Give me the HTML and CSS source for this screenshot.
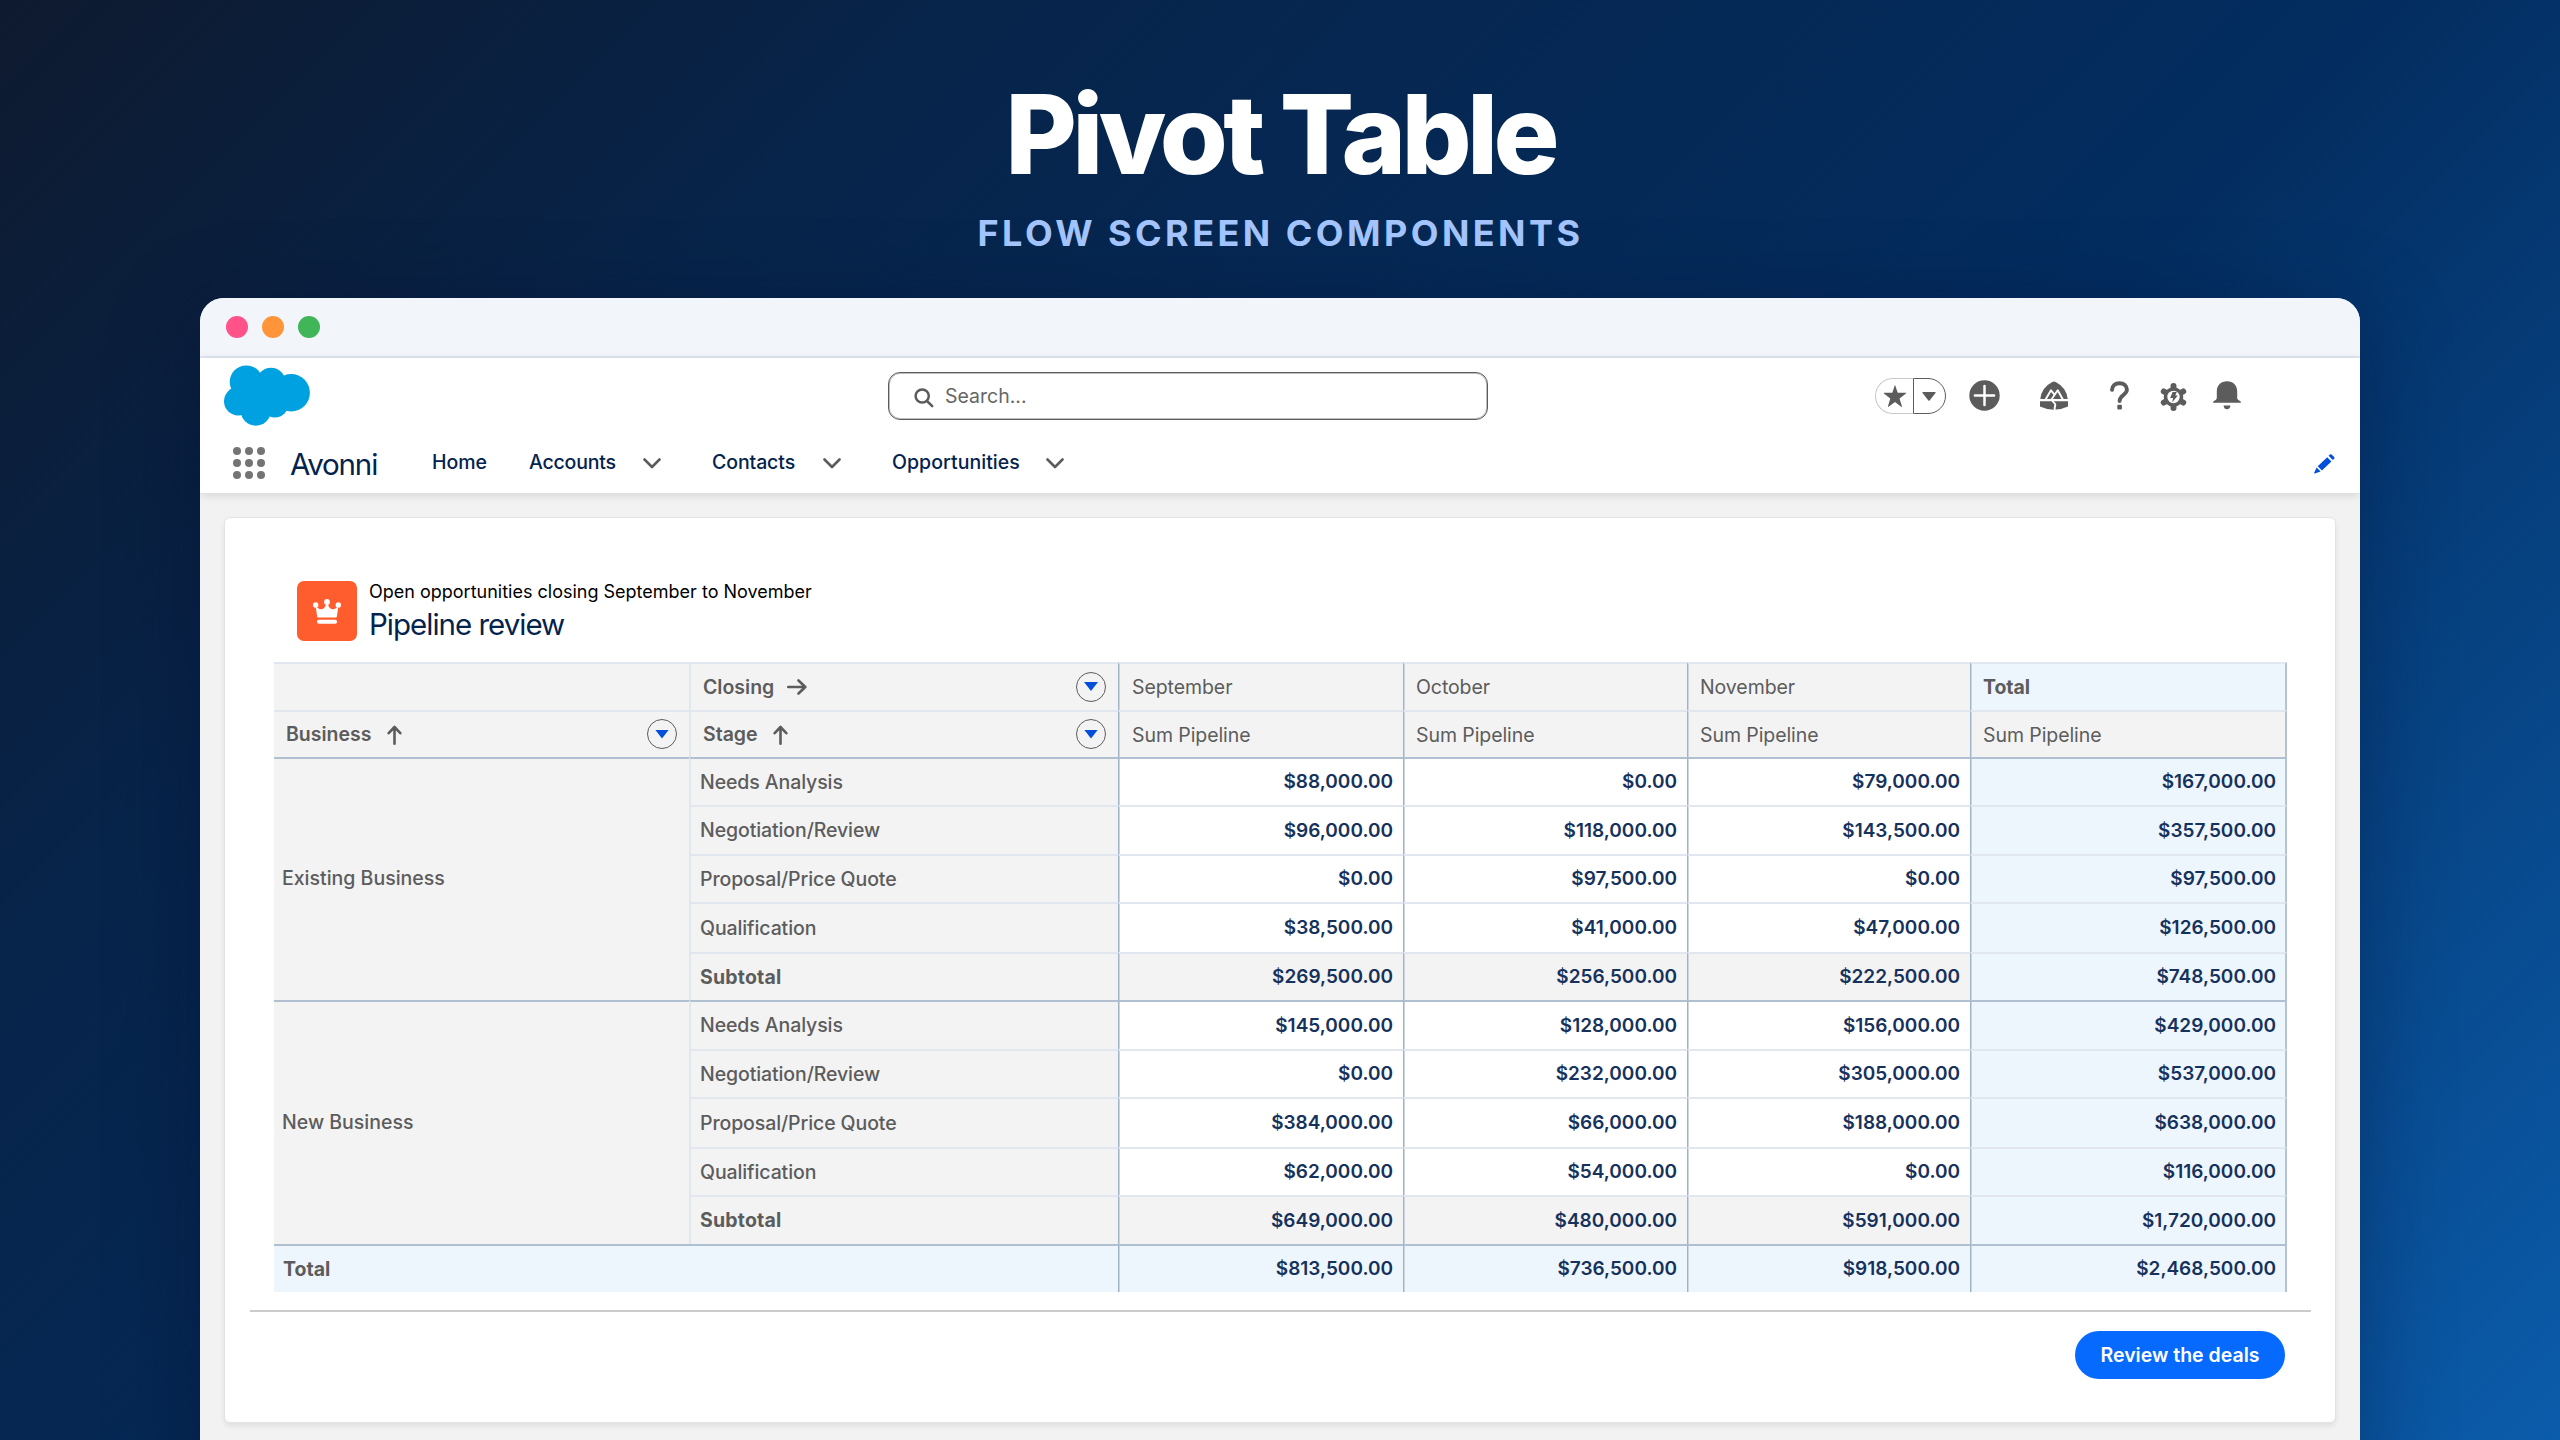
FILE: index.html
```html
<!DOCTYPE html>
<html lang="en">
<head>
<meta charset="utf-8">
<title>Pivot Table</title>
<link rel="stylesheet" href="styles.css">
</head>
<body>
<header class="hero">
  <h1 class="hero-title">Pivot Table</h1>
  <p class="hero-sub">FLOW SCREEN COMPONENTS</p>
</header>

<main class="window">
  <div class="titlebar">
    <span class="dot dot-pink"></span><span class="dot dot-orange"></span><span class="dot dot-green"></span>
  </div>

  <div class="appbar">
    <div class="global">
      <svg class="cloud" viewBox="0 0 86 61" fill="#00a1e0">
        <circle cx="22.3" cy="17" r="16.6"/><circle cx="47" cy="17.3" r="14.5"/><circle cx="67.2" cy="27.8" r="18.7"/>
        <circle cx="14.2" cy="36.3" r="14.2"/><circle cx="31.8" cy="45.7" r="15"/><circle cx="51" cy="39" r="13.4"/>
        <rect x="18" y="17" width="42" height="28"/>
      </svg>
      <div class="search">
        <svg width="20" height="20" viewBox="0 0 20 20" fill="none" stroke="#5c5c5c" stroke-width="2.5" stroke-linecap="round"><circle cx="8.2" cy="8" r="6.6"/><path d="M13 13l5.2 5.2"/></svg>
        <span>Search...</span>
      </div>
      <div class="fav">
        <span class="fav-star"><svg width="24" height="24" viewBox="0 0 24 24" fill="#5c5c5c"><path d="M12 .8l2.700 8h8.200q.6.3.1.8l-6.500 4.800 2.500 8.100q-.1.7-.8.3L12 18l-6.400 4.800q-.6.2-.7-.4l2.400-8L.9 9.600q-.4-.6.2-.8h8.200z"/></svg></span>
        <span class="fav-more"><svg width="14" height="9" viewBox="0 0 14 9" fill="#5c5c5c"><path d="M.8 0h12.400q.8.3.3 1L7.600 8.400q-.6.5-1.200 0L.5 1Q0 .3.800 0z"/></svg></span>
      </div>
      <svg class="i-plus" width="31" height="31" viewBox="0 0 31 31"><circle cx="15.500" cy="15.500" r="15.200" fill="#5c5c5c"/><path d="M15.500 5.900v19.200M5.900 15.500h19.200" stroke="#fff" stroke-width="2.500" stroke-linecap="round"/></svg>
      <svg class="i-trail" width="28" height="29" viewBox="0 0 28 29" fill="#5c5c5c">
        <path d="M.3 18Q1.500 6.500 12.300 1q1.700-.8 3.400 0Q26.500 6.500 27.700 18z"/>
        <path d="M0 20.300h28v5.200Q21.500 28.700 14 28.700T0 25.500z"/>
        <path d="M5.400 18.800L11 9.300l3.500 4.300M11.300 18.800l6.400-9.500 5.300 9.500" fill="none" stroke="#fff" stroke-width="1.900" stroke-linejoin="round"/>
        <path d="M12.600 19.500c.2 2.500 3.500 2.600 2.600 5-.4 1.300-.8 2.500-.4 4.500" fill="none" stroke="#fff" stroke-width="1.900"/>
      </svg>
      <svg class="i-help" width="19" height="29" viewBox="0 0 19 29"><path d="M2 8.800C2.200 4.500 5.200 2.200 9.500 2.200s7.400 2.600 7.400 6.600c0 5-7.300 5.600-7.300 11.200" fill="none" stroke="#5c5c5c" stroke-width="3.900" stroke-linecap="round"/><rect x="7.300" y="23.800" width="4.600" height="4.800" rx="1" fill="#5c5c5c"/></svg>
      <svg class="i-gear" width="27" height="30" viewBox="0 0 27 30">
        <g stroke="#5c5c5c" stroke-width="6" stroke-linecap="round"><path d="M13.500 4v22M3.800 9.500l19.400 11M3.800 20.500l19.400-11"/></g>
        <circle cx="13.500" cy="15" r="9.800" fill="#5c5c5c"/><circle cx="13.500" cy="15" r="6.200" fill="#fff"/>
        <path d="M12.600 10h4.200l-1.500 3.500h2.500l-5.700 7 1-4.600H10.200z" fill="#5c5c5c"/>
      </svg>
      <svg class="i-bell" width="28" height="29" viewBox="0 0 28 29" fill="#5c5c5c"><path d="M14 .3c6 0 10.200 4 10.200 10.200v6.300c0 1.400.7 2 2 2.600 1.200.5 1.800 1.300 1.800 2.300H0c0-1 .6-1.800 1.800-2.300 1.300-.6 2-1.200 2-2.600v-6.300C3.800 4.300 8 .3 14 .3zM10.600 24.600h6.800c0 2.400-1.500 3.700-3.400 3.700s-3.400-1.300-3.400-3.700z"/></svg>
    </div>
    <nav class="nav">
      <svg class="waffle" width="32" height="32" viewBox="0 0 32 32" fill="#747474"><circle cx="4" cy="4" r="4"/><circle cx="16" cy="4" r="4"/><circle cx="28" cy="4" r="4"/><circle cx="4" cy="16" r="4"/><circle cx="16" cy="16" r="4"/><circle cx="28" cy="16" r="4"/><circle cx="4" cy="28" r="4"/><circle cx="16" cy="28" r="4"/><circle cx="28" cy="28" r="4"/></svg>
      <span class="app-name">Avonni</span>
      <span class="tab tab-home">Home</span>
      <span class="tab tab-accounts">Accounts</span>
      <svg class="chev" width="18" height="11" viewBox="0 0 18 11"><path d="M1.500 1.500L9 9l7.500-7.500"/></svg>
      <span class="tab tab-contacts">Contacts</span>
      <svg class="chev" width="18" height="11" viewBox="0 0 18 11"><path d="M1.500 1.500L9 9l7.500-7.500"/></svg>
      <span class="tab tab-opps">Opportunities</span>
      <svg class="chev" width="18" height="11" viewBox="0 0 18 11"><path d="M1.500 1.500L9 9l7.500-7.500"/></svg>
      <svg class="pencil" width="21" height="20" viewBox="0 0 21 20" fill="#0250d9"><path d="M13.200 3.200l4.200 4.200L7.900 16.500 3.700 12.300zM14.600 1.800l1.300-1.300q.8-.7 1.700 0l2.500 2.500q.7.800 0 1.700l-1.300 1.400zM2.600 13.600l4 4-5.800 1.900q-.8.1-.6-.7z"/></svg>
    </nav>
  </div>

  <section class="card">
    <div class="heading">
      <span class="tile"><svg width="28" height="25" viewBox="0 0 28 25" fill="#fff"><circle cx="2.700" cy="6" r="2.700"/><circle cx="14" cy="3" r="2.900"/><circle cx="25.300" cy="6" r="2.700"/><path d="M2.500 6.500q3.500 4.800 7 3.500 3-1.300 3.600-5.500h1.800q.6 4.200 3.600 5.500 3.500 1.300 7-3.500L23.800 17.800q-.2.700-1 .7H5.200q-.8 0-1-.7z"/><rect x="4" y="20.700" width="20" height="4" rx="1.800"/></svg></span>
      <div class="heading-text">
        <p class="caption">Open opportunities closing September to November</p>
        <h2 class="title">Pipeline review</h2>
      </div>
    </div>

    <div class="pivot">
      <div class="c h edge"></div>
      <div class="c h sep b"><span>Closing</span><svg class="arrow" width="20" height="16" viewBox="0 0 20 16"><path d="M1.200 8h17M11.500 1.500L18.300 8l-6.800 6.500"/></svg><i class="menu"></i></div>
      <div class="c h v">September</div><div class="c h v">October</div><div class="c h v">November</div><div class="c h v t b">Total</div>

      <div class="c h edge b up1"><span>Business</span><svg class="arrow up" width="15" height="20" viewBox="0 0 15 20"><path d="M7.500 18.700v-16M1.700 8.200L7.500 2l5.800 6.200"/></svg><i class="menu"></i></div>
      <div class="c h sep b up1"><span>Stage</span><svg class="arrow up" width="15" height="20" viewBox="0 0 15 20"><path d="M7.500 18.700v-16M1.700 8.200L7.500 2l5.800 6.200"/></svg><i class="menu"></i></div>
      <div class="c h v low">Sum Pipeline</div><div class="c h v low">Sum Pipeline</div><div class="c h v low">Sum Pipeline</div><div class="c h v low">Sum Pipeline</div>

      <div class="c group dark">Existing Business</div>
      <div class="c l sep dark">Needs Analysis</div><div class="c n dark">$88,000.00</div><div class="c n dark">$0.00</div><div class="c n dark">$79,000.00</div><div class="c n t dark">$167,000.00</div>
      <div class="c l sep">Negotiation/Review</div><div class="c n">$96,000.00</div><div class="c n">$118,000.00</div><div class="c n">$143,500.00</div><div class="c n t">$357,500.00</div>
      <div class="c l sep">Proposal/Price Quote</div><div class="c n">$0.00</div><div class="c n">$97,500.00</div><div class="c n">$0.00</div><div class="c n t">$97,500.00</div>
      <div class="c l sep">Qualification</div><div class="c n">$38,500.00</div><div class="c n">$41,000.00</div><div class="c n">$47,000.00</div><div class="c n t">$126,500.00</div>
      <div class="c l sep bb">Subtotal</div><div class="c n s">$269,500.00</div><div class="c n s">$256,500.00</div><div class="c n s">$222,500.00</div><div class="c n t">$748,500.00</div>

      <div class="c group dark">New Business</div>
      <div class="c l sep dark">Needs Analysis</div><div class="c n dark">$145,000.00</div><div class="c n dark">$128,000.00</div><div class="c n dark">$156,000.00</div><div class="c n t dark">$429,000.00</div>
      <div class="c l sep">Negotiation/Review</div><div class="c n">$0.00</div><div class="c n">$232,000.00</div><div class="c n">$305,000.00</div><div class="c n t">$537,000.00</div>
      <div class="c l sep">Proposal/Price Quote</div><div class="c n">$384,000.00</div><div class="c n">$66,000.00</div><div class="c n">$188,000.00</div><div class="c n t">$638,000.00</div>
      <div class="c l sep">Qualification</div><div class="c n">$62,000.00</div><div class="c n">$54,000.00</div><div class="c n">$0.00</div><div class="c n t">$116,000.00</div>
      <div class="c l sep bb">Subtotal</div><div class="c n s">$649,000.00</div><div class="c n s">$480,000.00</div><div class="c n s">$591,000.00</div><div class="c n t">$1,720,000.00</div>

      <div class="c grand dark bb">Total</div><div class="c n t dark">$813,500.00</div><div class="c n t dark">$736,500.00</div><div class="c n t dark">$918,500.00</div><div class="c n t dark">$2,468,500.00</div>
    </div>

    <footer class="actions"><button class="btn">Review the deals</button></footer>
  </section>
</main>
</body>
</html>
```
FILE: styles.css
```css
* { box-sizing: border-box; margin: 0; padding: 0; }
html, body { width: 2560px; height: 1440px; overflow: hidden; }
body {
  font: 500 19.5px/24px Inter, "Liberation Sans", sans-serif;
  background: linear-gradient(135deg, #0e1a2f 0%, #07244a 24%, #032d60 60%, #0b5cab 100%);
}
svg { display: block; flex: none; }

.hero { height: 298px; padding-top: 74px; text-align: center; }
.hero-title { padding-left: 0; font-size: 110px; line-height: 120px; font-weight: 800; letter-spacing: -4.7px; color: #fff; }
.hero-sub { margin-top: 19px; padding-left: 1px; font-size: 36px; line-height: 40px; font-weight: 700; letter-spacing: 3.45px; color: #a2c3fb; }

.window {
  width: 2160px; height: 1200px; margin-left: 200px; overflow: hidden;
  border-radius: 24px; background: #f2f2f2;
  box-shadow: 0 20px 90px rgba(0, 10, 40, .35);
}
.titlebar {
  display: flex; align-items: center; gap: 14px; height: 60px; padding-left: 26px;
  background: #f2f5fa; border-bottom: 2px solid #e1e8f1;
}
.dot { width: 22px; height: 22px; border-radius: 50%; }
.dot-pink { background: #ff538a; }
.dot-orange { background: #ff9538; }
.dot-green { background: #41b658; }

.appbar { position: relative; height: 135px; background: #fff; box-shadow: 0 2px 9px rgba(0, 0, 0, .13); }
.global { display: flex; align-items: center; height: 75px; padding-left: 24px; }
.cloud { width: 86px; height: 61px; }
.search {
  display: flex; align-items: center; gap: 11px; width: 600px; height: 48px;
  margin-left: 578px; padding-left: 25px;
  border: 1px solid #5c5c5c; border-radius: 12px; background: #fff;
  box-shadow: inset 0 0 0 1px rgba(92, 92, 92, .4);
  font-weight: 400; color: #666;
}
.search svg { margin-top: 4px; }
.fav { display: flex; width: 71px; height: 36px; margin-left: 387px; }
.fav-star, .fav-more { display: flex; align-items: center; }
.fav-star { width: 38px; padding-left: 7px; border: 1.5px solid #c9c9c9; border-right: 0; border-radius: 18px 0 0 18px; }
.fav-more { width: 33px; padding: 2px 0 0 8px; border: 1.5px solid #5c5c5c; border-radius: 0 18px 18px 0; }
.i-plus { margin-left: 23px; }
.i-trail { margin-left: 40px; }
.i-help { margin-left: 42px; }
.i-gear { margin: 2px 0 0 31px; }
.i-bell { margin-left: 26px; }

.nav { display: flex; align-items: center; height: 60px; padding: 0 25px 0 33px; color: #03234d; }
.app-name { width: 142px; margin-left: 25px; padding-top: 2px; font-size: 29.5px; line-height: 36px; font-weight: 400; letter-spacing: -1.15px; }
.tab { padding-bottom: 2px; }
.tab-home { width: 97px; }
.tab-accounts { width: 114px; letter-spacing: -.2px; }
.tab-contacts { width: 111px; margin-left: 51px; letter-spacing: -.1px; }
.tab-opps { width: 154px; margin-left: 51px; letter-spacing: .05px; }
.chev path, .arrow path { fill: none; stroke: #5c5c5c; stroke-width: 2.6; stroke-linecap: round; stroke-linejoin: round; }
.pencil { margin: 2px 0 0 auto; }

.card {
  width: 2112px; height: 906px; margin: 24px 0 0 24px; padding: 63px 0 0;
  border: 1px solid #e3e3e3; border-radius: 6px; background: #fff;
  box-shadow: 0 3px 5px rgba(0, 0, 0, .08);
}
.heading { display: flex; gap: 12px; height: 60px; margin: 0 0 21px 72px; }
.tile { display: flex; align-items: center; justify-content: center; width: 60px; height: 60px; border-radius: 7px; background: #ff5d2d; }
.caption { font-size: 18px; line-height: 21px; font-weight: 400; color: #000; }
.title { padding-top: 2px; font-size: 29.5px; line-height: 40px; font-weight: 400; letter-spacing: -1px; color: #03234d; }

.pivot {
  display: grid; width: 2013px; height: 630px; margin-left: 49px;
  grid-template-columns: 415px 429px 285px 284px 283px 317px;
  grid-template-rows: 48px 47px 48px 49px 48px 50px 48px 49px 48px 50px 48px 49px 48px;
  color: #5c5c5c;
}
.c { display: flex; align-items: center; border-top: 2px solid #e1e6ef; }
.h { background: #f3f3f3; }
.edge { padding-left: 12px; }
.sep { padding-left: 12px; border-left: 2px solid #e1e6ef; }
.v { padding-left: 12px; font-weight: 400; letter-spacing: -.08px; }
.v:nth-child(3), .v:nth-child(9) { padding-left: 13px; }
.low { padding-top: 1px; }
.up1 span { margin-top: -2px; }
.l { padding: 0 0 1px 9px; background: #f3f3f3; letter-spacing: -.1px; }
.v, .n { border-left: 1px solid #9fb3c6; box-shadow: inset 1px 0 #cbd6e1; }
.n { justify-content: flex-end; padding: 0 10px 0 0; font-size: 19px; font-weight: 590; letter-spacing: 0; color: #16325c; background-color: #fff; }
.s { background-color: #f3f3f3; }
.c.t { background-color: #eef6fd; }
.v:nth-child(6), .v:nth-child(12), .n + .t { border-right: 2px solid #b4c3d2; }
.grand ~ .n { border-right: 0; }
.grand ~ .n:last-child { border-right: 2px solid #b4c3d2; }
.n + .t { padding-right: 9px; }
.grand ~ .n { padding-right: 10px; }
.grand ~ .n:last-child { padding-right: 9px; }
.b { font-weight: 600; }
.b.t, .bb { font-weight: 700; }
.l.bb { letter-spacing: .2px; }
.dark { border-top: 2px solid #b0c0d0; }
.group { grid-row: span 5; padding: 0 0 3px 8px; background: #f3f3f3; }
.grand { grid-column: span 2; padding: 0 0 0 9px; background: #eef6fd; }
.h .arrow { margin-left: 13px; }
.h .arrow.up { margin-left: 15px; }
.menu {
  display: flex; align-items: center; justify-content: center; width: 30px; height: 30px;
  margin: -1px 12px 0 auto; border: 1.5px solid #5c5c5c; border-radius: 50%;
}
.menu::before { content: ""; width: 14px; height: 9px; background: #0250d9; clip-path: polygon(0 0, 100% 0, 50% 100%); }

.actions { display: flex; justify-content: flex-end; margin: 18px 24px 0 25px; padding: 19px 26px 0 0; border-top: 2px solid #cbcbcb; }
.btn { width: 210px; height: 48px; border: 0; border-radius: 24px; background: #066afe; color: #fff; font: 600 19.5px/24px Inter, "Liberation Sans", sans-serif; }
```
